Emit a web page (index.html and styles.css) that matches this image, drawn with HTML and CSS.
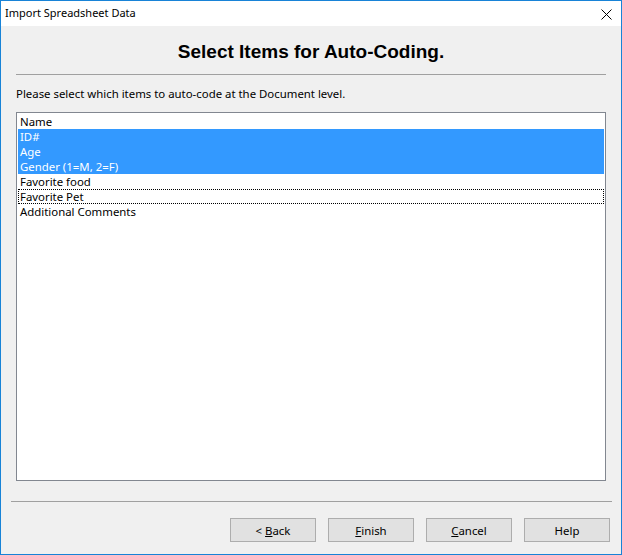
FILE: index.html
```html
<!DOCTYPE html>
<html>
<head>
<meta charset="utf-8">
<link rel="stylesheet" href="styles.css">
</head>
<body>
<div class="window">
  <div class="titlebar">
    <span class="title">Import Spreadsheet Data</span>
    <svg class="close" width="11" height="11" viewBox="0 0 11 11"><path d="M0.5 0.5 L10.5 10.5 M10.5 0.5 L0.5 10.5" stroke="#000" stroke-width="1" fill="none"/></svg>
  </div>
  <div class="body">
    <h1 class="heading">Select Items for Auto-Coding.</h1>
    <div class="sep top-sep"></div>
    <p class="prompt">Please select which items to auto-code at the Document level.</p>
    <div class="listbox">
      <div class="row">Name</div>
      <div class="row sel">ID#</div>
      <div class="row sel">Age</div>
      <div class="row sel">Gender (1=M, 2=F)</div>
      <div class="row">Favorite food</div>
      <div class="row focus">Favorite Pet</div>
      <div class="row">Additional Comments</div>
    </div>
    <div class="sep bottom-sep"></div>
    <div class="buttons">
      <button class="btn">&lt; <u>B</u>ack</button>
      <button class="btn"><u>F</u>inish</button>
      <button class="btn"><u>C</u>ancel</button>
      <button class="btn">Help</button>
    </div>
  </div>
</div>
</body>
</html>
```
FILE: styles.css
```css
html, body {
  margin: 0;
  padding: 0;
}
body {
  font-family: "Noto Sans", "Liberation Sans", sans-serif;
  font-size: 11.4px;
  color: #000;
}
.window {
  width: 622px;
  height: 555px;
  box-sizing: border-box;
  border: 1px solid #1883d7;
  background: #f0f0f0;
  display: flex;
  flex-direction: column;
}
.titlebar {
  height: 25px;
  background: #fff;
  display: flex;
  align-items: center;
  justify-content: space-between;
  padding: 0 9px 0 4px;
}
.title {
  font-size: 11px;
  line-height: 16px;
  margin-top: -1px;
}
.close {
  display: block;
  margin-top: 1px;
}
.body {
  flex: 1;
  display: flex;
  flex-direction: column;
  padding: 0 10px 0 10px;
}
.heading {
  font-family: "Liberation Sans", Arial, sans-serif;
  font-weight: bold;
  font-size: 19px;
  line-height: 22px;
  text-align: center;
  margin: 15px 0 0 0;
}
.sep {
  height: 0;
  border-top: 1px solid #a0a0a0;
}
.top-sep {
  margin: 11px 5px 0 5px;
}
.prompt {
  margin: 11px 0 0 5px;
  line-height: 16px;
}
.listbox {
  margin: 10px 5px 0 5px;
  height: 369px;
  box-sizing: border-box;
  border: 1px solid #828790;
  background: #fff;
  padding: 1px 1px;
}
.row {
  height: 15px;
  line-height: 15px;
  padding-left: 2px;
  box-sizing: border-box;
  white-space: nowrap;
}
.row.sel {
  background: #3399ff;
  color: #fff;
}
.row.focus {
  border: 1px dotted #000;
  line-height: 13px;
  padding-left: 1px;
}
.bottom-sep {
  margin: 20px -1px 0 0;
}
.buttons {
  display: flex;
  justify-content: flex-end;
  gap: 12px;
  margin-top: 16px;
  padding-right: 1px;
}
.btn {
  width: 86px;
  height: 24px;
  box-sizing: border-box;
  background: #e1e1e1;
  border: 1px solid #adadad;
  font-family: "Noto Sans", "Liberation Sans", sans-serif;
  font-size: 11.4px;
  color: #000;
  padding: 0;
  margin: 0;
  border-radius: 0;
}
.btn u {
  text-decoration: underline;
  text-underline-offset: 1px;
}
```
